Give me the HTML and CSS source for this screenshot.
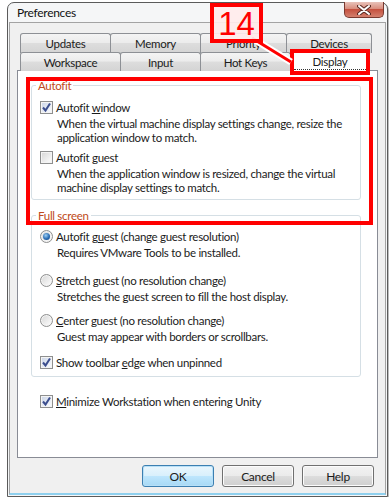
FILE: index.html
```html
<!DOCTYPE html>
<html lang="en">

<head>
  <meta charset="UTF-8">
  <title>Preferences</title>
  <link rel="stylesheet" href="styles.css">
</head>

<body>
  <div class="window">
    <div class="titlebar">
      <span class="title">Preferences</span>
      <div class="close">
        <svg width="14" height="10" viewBox="0 0 14 10">
          <path d="M2 1 L12 9 M12 1 L2 9" stroke="#5a2a22" stroke-width="4" stroke-linecap="round" />
          <path d="M2 1 L12 9 M12 1 L2 9" stroke="#fff" stroke-width="2" stroke-linecap="round" />
        </svg>
      </div>
    </div>

    <div class="client">
      <div class="tabs">
        <div class="tabrow">
          <div class="tab t-updates">Updates</div>
          <div class="tab t-memory">Memory</div>
          <div class="tab t-priority">Priority</div>
          <div class="tab t-devices">Devices</div>
        </div>
        <div class="tabrow front">
          <div class="tab t-workspace">Workspace</div>
          <div class="tab t-input">Input</div>
          <div class="tab t-hotkeys">Hot Keys</div>
          <div class="tab t-display sel"><span class="focus">Display</span></div>
        </div>
      </div>

      <div class="panel">
        <fieldset class="group">
          <legend>Autofit</legend>
          <div class="opt">
            <span class="cb on"><svg viewBox="0 0 13 13"><path d="M3 6.5 L5.5 9.5 L10 2.5" /></svg></span>
            <span>Autofit <u>w</u>indow</span>
          </div>
          <p class="desc">When the virtual machine display settings change, resize the<br>application window to match.</p>
          <div class="opt mt5">
            <span class="cb"></span>
            <span>Autofit <u>g</u>uest</span>
          </div>
          <p class="desc">When the application window is resized, change the virtual<br>machine display settings to match.</p>
        </fieldset>

        <fieldset class="group full">
          <legend>Full screen</legend>
          <div class="opt">
            <span class="rb on"></span>
            <span>Autofit g<u>u</u>est (change guest resolution)</span>
          </div>
          <p class="desc">Requires VMware Tools to be installed.</p>
          <div class="opt mt13">
            <span class="rb"></span>
            <span><u>S</u>tretch guest (no resolution change)</span>
          </div>
          <p class="desc">Stretches the guest screen to fill the host display.</p>
          <div class="opt mt9">
            <span class="rb"></span>
            <span><u>C</u>enter guest (no resolution change)</span>
          </div>
          <p class="desc">Guest may appear with borders or scrollbars.</p>
          <div class="opt mt11">
            <span class="cb on"><svg viewBox="0 0 13 13"><path d="M3 6.5 L5.5 9.5 L10 2.5" /></svg></span>
            <span>Show toolbar <u>e</u>dge when unpinned</span>
          </div>
        </fieldset>

        <div class="opt unity">
          <span class="cb on"><svg viewBox="0 0 13 13"><path d="M3 6.5 L5.5 9.5 L10 2.5" /></svg></span>
          <span><u>M</u>inimize Workstation when entering Unity</span>
        </div>
      </div>

      <div class="buttons">
        <button class="btn default">OK</button>
        <button class="btn">Cancel</button>
        <button class="btn">Help</button>
      </div>
    </div>
  </div>

  <!-- red callouts drawn over the screenshot -->
  <div class="mark mark-panel"></div>
  <div class="mark mark-tab"></div>
  <svg class="arrow" width="391" height="80" viewBox="0 0 391 80">
    <path d="M252 38 L291 62" stroke="#fff" stroke-width="7" />
    <path d="M252 38 L291 62" stroke="#f00" stroke-width="3" />
  </svg>
  <div class="mark step">14</div>
</body>

</html>
```

FILE: styles.css
```css
* {
  margin: 0px;
  padding: 0px;
  box-sizing: border-box;
}

body {
  background-color: #fff;
  font-family: Lato, "Noto Sans", sans-serif;
  font-size: 11.5px;
  letter-spacing: -0.3px;
  color: #1b1b1b;
}

.window {
  margin: 2px 0 0 7px;
  width: 381px;
  height: 495px;
  border: 1px solid #5b5b5b;
  border-radius: 7px 7px 0 0;
  background-color: #f5f6f7;
  box-shadow: 1px 1px 0 #bdbdbd;
  display: flex;
  flex-direction: column;
}

.titlebar {
  height: 19px;
  display: flex;
  justify-content: space-between;
  align-items: flex-start;
  padding-left: 9px;
}

.title {
  line-height: 20px;
  font-size: 12px;
  color: #111;
}

.close {
  width: 40px;
  height: 16px;
  margin: -1px 3px 0 0;
  border: 1px solid #7a3a30;
  border-top: none;
  border-radius: 0 0 5px 5px;
  background: linear-gradient(#e8c2b9, #d98d7d 45%, #c5513f 50%, #d4806e);
  display: flex;
  align-items: center;
  justify-content: center;
}

.client {
  flex: 1;
  margin: 0 1px 1px;
  border: 1px solid #a3a3a3;
  border-bottom: 2px solid #8fd0ee;
  background-color: #f0f0f0;
  padding: 10px 7px 6px;
  display: flex;
  flex-direction: column;
}

/* tabs */
.tabs {
  margin-left: 3px;
  position: relative;
  z-index: 1;
}

.tabrow {
  display: flex;
  height: 20px;
}

.tabrow.front {
  margin-top: -1px;
  height: 19px;
}

.tab {
  border: 1px solid #8d9095;
  border-bottom: none;
  border-radius: 3px 3px 0 0;
  margin-right: -1px;
  background: linear-gradient(#f4f4f4, #ececec 45%, #dddddd 50%, #d4d4d4);
  display: flex;
  align-items: center;
  justify-content: center;
  color: #1b1b1b;
}

.t-updates { width: 91px; }
.t-memory { width: 91px; }
.t-priority { width: 87px; }
.t-devices { width: 86px; }
.t-workspace { width: 101px; }
.t-input { width: 81px; }
.t-hotkeys { width: 91px; }
.t-display { width: 80px; }

.tab.sel {
  align-self: flex-start;
  height: 22px;
  margin-top: -2px;
  background: #fff;
  padding-top: 1px;
}

.focus {
  display: block;
  width: 72px;
  text-align: center;
  line-height: 15px;
  border-bottom: 1px dotted #333;
}

/* page */
.panel {
  flex: 1;
  margin-top: -1px;
  background-color: #fff;
  border: 1px solid #898c95;
  padding: 7px 16px 0 13px;
}

.group {
  border: 1px solid #d5dfe5;
  border-radius: 3px;
  padding: 7px 8px 4px;
}

.group.full {
  margin-top: 8px;
  padding: 6px 8px 6px;
}

legend {
  color: #c04a20;
  line-height: 15px;
  padding: 0 2px;
  margin-left: -4px;
}

.opt {
  display: flex;
  align-items: center;
  height: 15px;
  line-height: 15px;
}

.desc {
  padding-left: 17px;
  margin-top: 2px;
  line-height: 14px;
  white-space: nowrap;
}

.mt5 { margin-top: 5px; }
.mt9 { margin-top: 9px; }
.mt11 { margin-top: 11px; }
.mt13 { margin-top: 13px; }

.unity {
  margin: 17px 0 0 9px;
}

.cb,
.rb {
  flex: none;
  width: 13px;
  height: 13px;
  margin-right: 3px;
  border: 1px solid #8e8f8f;
  background: linear-gradient(135deg, #d6d6d6, #f7f7f7 80%);
  box-shadow: inset 0 0 0 1px #f4f4f4;
  position: relative;
}

.cb.on {
  background: linear-gradient(135deg, #c9d3e6, #f3f6fb 80%);
}

.cb svg {
  position: absolute;
  left: -1px;
  top: -1px;
  width: 13px;
  height: 13px;
}

.cb path {
  fill: none;
  stroke: #3c4e8e;
  stroke-width: 2;
}

.rb {
  border-radius: 50%;
}

.rb.on::after {
  content: "";
  position: absolute;
  left: 2px;
  top: 2px;
  width: 7px;
  height: 7px;
  border-radius: 50%;
  background: radial-gradient(circle at 40% 35%, #9fd0f5, #2a6db4 55%, #173e7a);
}

/* buttons */
.buttons {
  display: flex;
  justify-content: flex-end;
  gap: 8px;
  margin: 7px 4px 0 0;
}

.btn {
  width: 72px;
  height: 22px;
  font-family: inherit;
  font-size: 12px;
  letter-spacing: inherit;
  color: #1b1b1b;
  border: 1px solid #707070;
  border-radius: 3px;
  background: linear-gradient(#f2f2f2, #ebebeb 48%, #dddddd 50%, #cfcfcf);
  box-shadow: inset 0 0 0 1px #fcfcfc;
}

.btn.default {
  border-color: #3c7fb1;
  background: linear-gradient(#eaf6fd, #d9f0fc 48%, #bee6fd 50%, #a7d9f5);
  box-shadow: inset 0 0 0 1px #b8e0f7;
}

/* callouts */
.mark {
  position: absolute;
  z-index: 5;
  border: 4px solid #f00;
}

.mark-panel {
  left: 26px;
  top: 77px;
  width: 347px;
  height: 148px;
}

.mark-tab {
  left: 290px;
  top: 49px;
  width: 80px;
  height: 26px;
}

.arrow {
  position: absolute;
  z-index: 5;
  left: 0;
  top: 0;
}

.step {
  left: 210px;
  top: 3px;
  width: 53px;
  height: 40px;
  background-color: rgba(255, 236, 236, 0.92);
  color: #f00;
  font-family: "Liberation Sans", Arial, sans-serif;
  font-size: 33px;
  letter-spacing: 0;
  line-height: 34px;
  text-align: center;
}
```
